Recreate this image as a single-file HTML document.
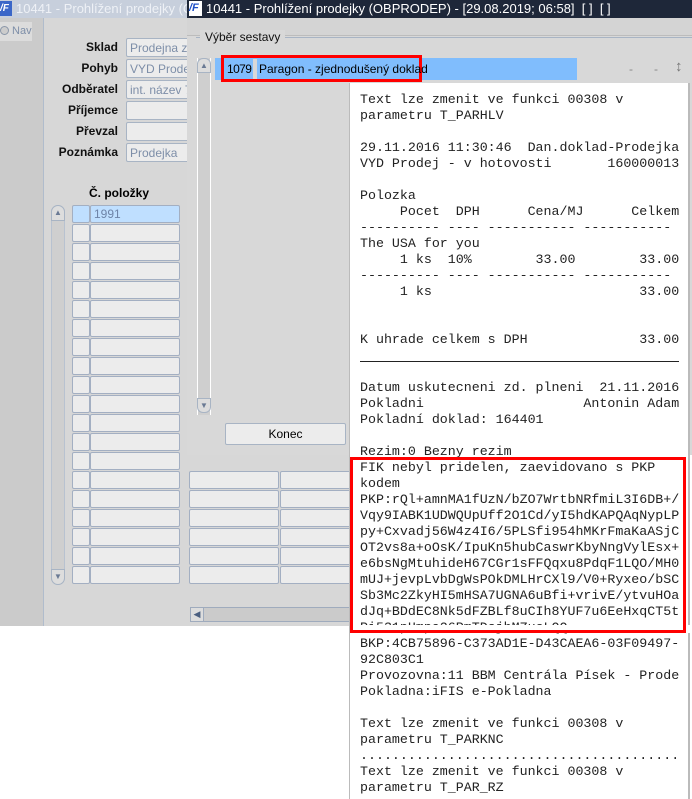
<!DOCTYPE html>
<html><head><meta charset="utf-8"><style>
*{margin:0;padding:0;box-sizing:border-box}
body{width:692px;height:799px;position:relative;overflow:hidden;background:#fff;font-family:"Liberation Sans",sans-serif;font-size:12px}
.a{position:absolute}
.lbl{position:absolute;right:574px;font-weight:bold;font-size:12px;color:#111;text-align:right}
.inp{position:absolute;left:126px;width:70px;height:19px;background:#ececec;border:1px solid #a8b4c4;border-radius:2px;color:#7d8ea8;font-size:12px;padding:2px 0 0 3px;white-space:nowrap;overflow:hidden}
.cell{position:absolute;height:18px;background:#ececec;border:1px solid #a3afc2;border-radius:2px}
pre{font-family:"Liberation Mono",monospace;font-size:13.3px;line-height:16px;color:#222}
</style></head><body>
<!-- back window -->
<div class="a" style="left:0;top:0;width:350px;height:626px;background:#d7d7d7"></div>
<div class="a" style="left:0;top:18px;width:44px;height:608px;background:#cbcbcb;border-right:1px solid #b0bccc"></div>
<div class="a" style="left:0;top:0;width:187px;height:18px;background:#c7cfdc;color:#eef1f6;font-size:13px;padding:1px 0 0 16px;white-space:nowrap;overflow:hidden">10441 - Prohlížení prodejky (OB</div>
<div class="a" style="left:0;top:1px;width:12px;height:15px;background:#3a66c8;color:#fff;font-size:10px;font-weight:bold;font-style:italic;line-height:15px">/F</div>
<div class="a" style="left:0;top:22px;width:32px;height:19px;background:#dcdcdc;color:#7d8ea8;font-size:11px;padding:3px 0 0 0;white-space:nowrap;overflow:hidden"><span style="display:inline-block;width:9px;height:9px;border:1px solid #8a96a8;border-radius:50%;background:#ccc;vertical-align:-1px"></span> Nav</div>
<div class="lbl" style="top:40px">Sklad</div><div class="inp" style="top:38px">Prodejna zbo</div>
<div class="lbl" style="top:61px">Pohyb</div><div class="inp" style="top:59px">VYD Prodej</div>
<div class="lbl" style="top:82px">Odběratel</div><div class="inp" style="top:80px">int. název 71</div>
<div class="lbl" style="top:103px">Příjemce</div><div class="inp" style="top:101px"></div>
<div class="lbl" style="top:124px">Převzal</div><div class="inp" style="top:122px"></div>
<div class="lbl" style="top:145px">Poznámka</div><div class="inp" style="top:143px">Prodejka</div>
<div class="a" style="left:89px;top:186px;font-weight:bold;font-size:12px">Č. položky</div>
<div class="a" style="left:51px;top:205px;width:14px;height:380px;background:#cfcfcf;border-radius:7px;border:1px solid #b8c2d0"></div>
<div class="a" style="left:51px;top:205px;width:14px;height:16px;background:#ddd;border:1px solid #a8b4c4;border-radius:7px 7px 0 0;color:#6a7a94;font-size:8px;text-align:center;line-height:14px">▲</div>
<div class="a" style="left:51px;top:569px;width:14px;height:16px;background:#ddd;border:1px solid #a8b4c4;border-radius:0 0 7px 7px;color:#6a7a94;font-size:8px;text-align:center;line-height:14px">▼</div>
<div id="rows"></div>
<div class="a" style="left:190px;top:607px;width:160px;height:15px;background:#cbcbcb;border:1px solid #9fabbd"></div>
<div class="a" style="left:191px;top:608px;width:13px;height:13px;background:#ddd;border-right:1px solid #9fabbd;color:#4a5f80;font-size:9px;line-height:13px;text-align:center">◀</div>
<!-- front window -->
<div class="a" style="left:187px;top:0;width:505px;height:18px;background:#1e2739;color:#fff;font-size:13px;padding:1px 0 0 19px;white-space:nowrap">10441 - Prohlížení prodejky (OBPRODEP) - [29.08.2019; 06:58]&nbsp; [ ]&nbsp; [ ]</div>
<div class="a" style="left:189px;top:1px;width:13px;height:15px;background:#fff;color:#1e50c8;font-size:11px;font-weight:bold;font-style:italic;line-height:15px">/F</div>
<div class="a" style="left:187px;top:18px;width:505px;height:437px;background:#d8d8d8"></div>
<div class="a" style="left:187px;top:18px;width:505px;height:18px;background:#d4d4d4;border-bottom:1px solid #bcbcbc"></div>
<div class="a" style="left:196px;top:37px;width:496px;height:1px;background:#a8b4c4"></div>
<div class="a" style="left:200px;top:30px;background:#d8d8d8;padding:0 5px;font-size:12px;color:#111">Výběr sestavy</div>
<div class="a" style="left:197px;top:58px;width:14px;height:357px;background:#cfcfcf;border-left:1px solid #fff;border-right:1px solid #fff"></div>
<div class="a" style="left:197px;top:58px;width:14px;height:15px;background:#ddd;border:1px solid #a8b4c4;border-radius:6px 6px 0 0;color:#6a7a94;font-size:8px;text-align:center;line-height:13px">▲</div>
<div class="a" style="left:197px;top:398px;width:14px;height:15px;background:#ddd;border:1px solid #a8b4c4;border-radius:0 0 6px 6px;color:#6a7a94;font-size:8px;text-align:center;line-height:13px">▼</div>
<div class="a" style="left:215px;top:58px;width:362px;height:22px;background:#80bdfd"></div>
<div class="a" style="left:221px;top:55px;width:201px;height:27px;border:3px solid #f00"></div>
<div class="a" style="left:227px;top:62px;font-size:12px;letter-spacing:-0.6px;color:#000">1079</div>
<div class="a" style="left:253px;top:59px;width:4px;height:20px;background:#d8d8d8"></div>
<div class="a" style="left:259px;top:62px;font-size:12px;color:#000">Paragon - zjednodušený doklad</div>
<div class="a" style="left:629px;top:62px;color:#888">-</div>
<div class="a" style="left:654px;top:62px;color:#888">-</div>
<div class="a" style="left:675px;top:58px;color:#777;font-size:15px">↕</div>
<div class="a" style="left:225px;top:423px;width:121px;height:22px;background:#ececec;border:1px solid #a8b4c4;border-radius:2px;text-align:center;font-size:12px;line-height:20px">Konec</div>
<!-- receipt -->
<div class="a" style="left:349px;top:83px;width:341px;height:716px;background:#fff;border-left:1px solid #bbb;border-right:2px solid #bbb"></div>
<pre class="a" style="left:360px;top:92px">Text lze zmenit ve funkci 00308 v
parametru T_PARHLV

29.11.2016 11:30:46  Dan.doklad-Prodejka
VYD Prodej - v hotovosti       160000013

Polozka
     Pocet  DPH      Cena/MJ      Celkem
---------- ---- ----------- -----------
The USA for you
     1 ks  10%        33.00        33.00
---------- ---- ----------- -----------
     1 ks                          33.00


K uhrade celkem s DPH              33.00


Datum uskutecneni zd. plneni  21.11.2016
Pokladni                    Antonin Adam
Pokladní doklad: 164401

Rezim:0 Bezny rezim
FIK nebyl pridelen, zaevidovano s PKP
kodem
PKP:rQl+amnMA1fUzN/bZO7WrtbNRfmiL3I6DB+/
Vqy9IABK1UDWQUpUff2O1Cd/yI5hdKAPQAqNypLP
py+Cxvadj56W4z4I6/5PLSfi954hMKrFmaKaASjC
OT2vs8a+oOsK/IpuKn5hubCaswrKbyNngVylEsx+
e6bsNgMtuhideH67CGr1sFFQqxu8PdqF1LQO/MH0
mUJ+jevpLvbDgWsPOkDMLHrCXl9/V0+Ryxeo/bSC
Sb3Mc2ZkyHI5mHSA7UGNA6uBfi+vrivE/ytvuHOa
dJq+BDdEC8Nk5dFZBLf8uCIh8YUF7u6EeHxqCT5t
Pi531pHmpa26PmTDsjbMZucLQQ==
BKP:4CB75896-C373AD1E-D43CAEA6-03F09497-
92C803C1
Provozovna:11 BBM Centrála Písek - Prode
Pokladna:iFIS e-Pokladna

Text lze zmenit ve funkci 00308 v
parametru T_PARKNC
........................................
Text lze zmenit ve funkci 00308 v
parametru T_PAR_RZ</pre>
<div class="a" style="left:360px;top:361px;width:319px;height:1px;background:#222"></div>
<div class="a" style="left:350px;top:625px;width:340px;height:8px;background:#fff"></div>
<div class="a" style="left:350px;top:457px;width:336px;height:176px;border:3px solid #f00"></div>
<script>
var h='';
for(var i=0;i<20;i++){var y=205+i*19;
h+='<div class="cell" style="left:72px;top:'+y+'px;width:18px;'+(i==0?'background:#bfdfff':'')+'"></div>';
h+='<div class="cell" style="left:90px;top:'+y+'px;width:90px;'+(i==0?'background:#bfdfff;color:#6e84a8;padding:1px 0 0 3px;font-size:12px':'')+'">'+(i==0?'1991':'')+'</div>';
if(y>=455){h+='<div class="cell" style="left:189px;top:'+y+'px;width:90px"></div><div class="cell" style="left:280px;top:'+y+'px;width:75px"></div>';}
}
document.getElementById('rows').innerHTML=h;
</script>
</body></html>
